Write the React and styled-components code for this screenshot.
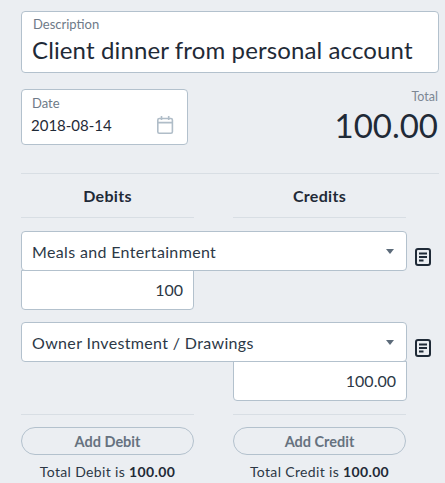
import React from 'react';
import styled, { createGlobalStyle } from 'styled-components';

const GlobalStyle = createGlobalStyle`
  html, body {
    margin: 0;
    padding: 0;
    background: #ebeef2;
    font-family: "Lato", "Noto Sans", sans-serif;
    color: #1f2a37;
  }
  * { box-sizing: border-box; }
`;

const Page = styled.div`
  width: 445px;
  height: 483px;
  overflow: hidden;
  padding: 11px 6px 0 21px;
`;

const Field = styled.div`
  background: #fff;
  border: 1px solid #b3c1cd;
  border-radius: 4px;
`;

const DescriptionField = styled(Field)`
  height: 62px;
  padding: 4px 10px;
`;

const FieldLabel = styled.div`
  font-size: 13px;
  line-height: 16px;
  padding-left: 1px;
  color: #6e7a88;
`;

const DescriptionValue = styled.div`
  font-size: 24px;
  line-height: 30px;
  margin-top: 3px;
  white-space: nowrap;
  letter-spacing: 0.12px;
`;

const SummaryRow = styled.div`
  display: flex;
  justify-content: space-between;
  margin-top: 16px;
  padding-bottom: 28px;
  border-bottom: 1px solid #d8dee4;
`;

const DateField = styled(Field)`
  width: 167px;
  height: 56px;
  padding: 5px 13px 0 9px;
`;

const DateRow = styled.div`
  display: flex;
  align-items: center;
  justify-content: space-between;
  margin-top: 2px;
  font-size: 15px;
  line-height: 24px;
`;

const TotalBlock = styled.div`
  text-align: right;
  padding: 1px 1px 0 0;
`;

const TotalLabel = styled.div`
  font-size: 12.5px;
  line-height: 14px;
  color: #7c8794;
`;

const TotalValue = styled.div`
  font-size: 33px;
  line-height: 40px;
  margin-top: 1px;
`;

const Columns = styled.div`
  display: grid;
  grid-template-columns: 173px 173px;
  column-gap: 39px;
`;

const ColumnHead = styled.div`
  height: 44px;
  line-height: 44px;
  text-align: center;
  font-size: 16px;
  font-weight: 700;
  letter-spacing: 0.3px;
  border-bottom: 1px solid #d8dee4;
`;

const Entry = styled.div`
  display: grid;
  grid-template-columns: 173px 39px 174px 32px;
  margin-top: ${(p) => p.$top}px;
`;

const SelectBox = styled(Field)`
  grid-column: 1 / 4;
  height: 40px;
  display: flex;
  align-items: center;
  justify-content: space-between;
  padding: 0 12px 0 10px;
  font-size: 16px;
  letter-spacing: 0.35px;
  color: #2c3846;
  z-index: 1;
`;

const Caret = styled.span`
  width: 0;
  height: 0;
  border-left: 4px solid transparent;
  border-right: 4px solid transparent;
  border-top: 5px solid #5c6b7a;
`;

const NoteButton = styled.div`
  grid-column: 4;
  padding: 17px 0 0 8px;
  line-height: 0;
`;

const AmountBox = styled(Field)`
  grid-row: 2;
  grid-column: ${(p) => p.$col};
  height: 40px;
  margin-top: -1px;
  border-top-left-radius: 0;
  border-top-right-radius: 0;
  text-align: right;
  line-height: 38px;
  padding-right: 10px;
  font-size: 16px;
  color: #2c3846;
`;

const Footer = styled(Columns)`
  margin-top: 13px;
`;

const FooterCol = styled.div`
  border-top: 1px solid #d8dee4;
  padding-top: 12px;
  text-align: center;
`;

const AddButton = styled.button`
  display: block;
  width: 100%;
  height: 28px;
  border: 1px solid #b3c1cd;
  border-radius: 14px;
  background: transparent;
  font-family: inherit;
  font-size: 14.5px;
  font-weight: 700;
  color: #66727f;
`;

const TotalLine = styled.div`
  margin-top: 8px;
  font-size: 14px;
  line-height: 18px;
  letter-spacing: 0.35px;
  color: #2c3846;
  b { font-weight: 700; color: #1f2a37; }
`;

const CalendarIcon = () => (
  <svg width="18" height="20" viewBox="0 0 18 20" fill="none" stroke="#b0bdc8" strokeWidth="1.6">
    <rect x="1.8" y="3.5" width="14.6" height="14.7" rx="1.5" />
    <path d="M1.8 7.6h14.6M5.5 1v4M12.7 1v4" />
  </svg>
);

const NoteIcon = () => (
  <svg width="16" height="18" viewBox="0 0 16 18" fill="none" stroke="#1f2a37" strokeWidth="2">
    <rect x="1" y="1" width="14" height="16" rx="2" />
    <path d="M4 5.5h8M4 9h8M4 12.5h4.5" />
  </svg>
);

const EntryRow = ({ account, amount, col, top }) => (
  <Entry $top={top}>
    <SelectBox>
      {account}
      <Caret />
    </SelectBox>
    <NoteButton>
      <NoteIcon />
    </NoteButton>
    <AmountBox $col={col}>{amount}</AmountBox>
  </Entry>
);

export default function App() {
  return (
    <Page>
      <GlobalStyle />
      <DescriptionField>
        <FieldLabel>Description</FieldLabel>
        <DescriptionValue>Client dinner from personal account</DescriptionValue>
      </DescriptionField>
      <SummaryRow>
        <DateField>
          <FieldLabel>Date</FieldLabel>
          <DateRow>
            2018-08-14
            <CalendarIcon />
          </DateRow>
        </DateField>
        <TotalBlock>
          <TotalLabel>Total</TotalLabel>
          <TotalValue>100.00</TotalValue>
        </TotalBlock>
      </SummaryRow>
      <Columns>
        <ColumnHead>Debits</ColumnHead>
        <ColumnHead>Credits</ColumnHead>
      </Columns>
      <EntryRow account="Meals and Entertainment" amount="100" col={1} top={13} />
      <EntryRow account="Owner Investment / Drawings" amount="100.00" col={3} top={12} />
      <Footer>
        <FooterCol>
          <AddButton>Add Debit</AddButton>
          <TotalLine>Total Debit is <b>100.00</b></TotalLine>
        </FooterCol>
        <FooterCol>
          <AddButton>Add Credit</AddButton>
          <TotalLine>Total Credit is <b>100.00</b></TotalLine>
        </FooterCol>
      </Footer>
    </Page>
  );
}
